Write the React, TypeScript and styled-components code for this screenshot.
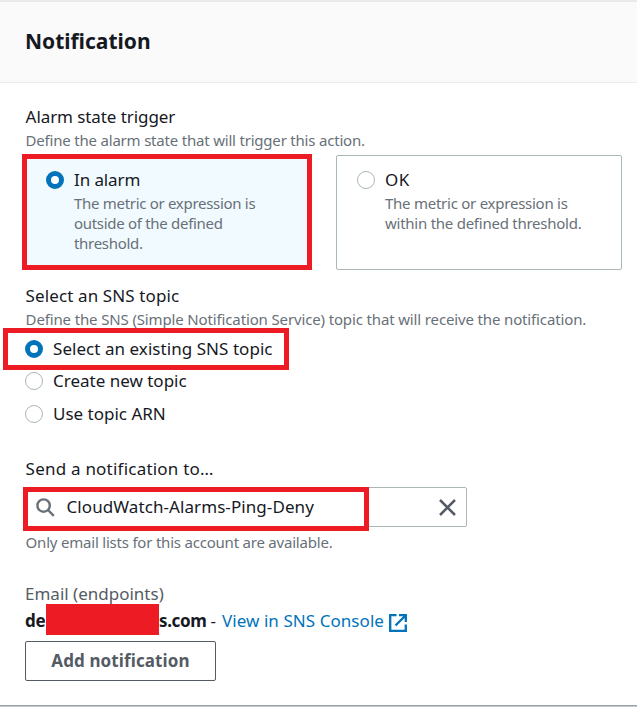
import React from "react";
import styled, { createGlobalStyle } from "styled-components";

const GlobalStyle = createGlobalStyle`
  * { box-sizing: border-box; }
  body {
    margin: 0;
    background: #fff;
    color: #16191f;
    font-family: "Noto Sans", "Open Sans", sans-serif;
    overflow: hidden;
  }
`;

const Panel = styled.section`
  display: flex;
  flex-direction: column;
  height: 707px;
  border-top: 2px solid #eaeaea;
`;

const Header = styled.header`
  height: 81px;
  padding: 25px 0 0 25px;
  background: #fafafa;
  border-bottom: 1px solid #eaeded;
`;

const Title = styled.h2`
  margin: 0;
  font-size: 21px;
  line-height: 28px;
  font-weight: 700;
`;

const Body = styled.div`
  flex: 1;
  display: flex;
  flex-direction: column;
  align-items: flex-start;
  padding: 22px 0 0 25px;
`;

const Footer = styled.div`
  height: 2px;
  background: #c3cacd;
  border-top: 1px solid #98a3a8;
`;

const Label = styled.div<{ $track?: number; $muted?: boolean }>`
  font-size: 17px;
  line-height: 23px;
  white-space: nowrap;
  letter-spacing: ${(p) => (p.$track ? `${p.$track}px` : "normal")};
  color: ${(p) => (p.$muted ? "#545b64" : "inherit")};
`;

const Hint = styled.div<{ $track?: number; $wrap?: boolean }>`
  max-width: ${(p) => (p.$wrap ? "205px" : "none")};
  font-size: 15px;
  line-height: 20px;
  color: #687078;
  white-space: ${(p) => (p.$wrap ? "normal" : "nowrap")};
  letter-spacing: ${(p) => p.$track ?? 0}px;
`;

const Field = styled.div<{ $gap: number; $after: number }>`
  display: flex;
  flex-direction: column;
  gap: ${(p) => p.$gap}px;
  margin-bottom: ${(p) => p.$after}px;
  padding-left: 0.6px;
`;

const Tiles = styled.div`
  display: grid;
  grid-template-columns: 286px 286px;
  column-gap: 25px;
  margin-bottom: 14px;
`;

const Tile = styled.div<{ $selected?: boolean }>`
  position: relative;
  display: flex;
  gap: 10px;
  height: 115px;
  padding: 12px 14px 0 20px;
  border: 1px solid #aab7b8;
  border-radius: 2px;
  background: ${(p) => (p.$selected ? "#f1faff" : "#fff")};
`;

const Highlight = styled.span<{ $inset: string }>`
  position: absolute;
  inset: ${(p) => p.$inset};
  border: 5px solid #ed1c24;
  pointer-events: none;
`;

const Radio = styled.span<{ $checked?: boolean }>`
  flex: none;
  width: 18px;
  height: 18px;
  margin-top: 3px;
  border-radius: 50%;
  background: #fff;
  border: ${(p) => (p.$checked ? "5.5px solid #0073bb" : "1px solid #aab7b8")};
`;

const TileText = styled.div`
  display: flex;
  flex-direction: column;
  gap: 2px;
`;

const RadioList = styled.div`
  display: grid;
  grid-template-rows: 32px 33px 23px;
  margin-bottom: 32px;
`;

const RadioRow = styled.div`
  position: relative;
  display: flex;
  gap: 10px;
  width: 264px;
  height: 23px;
`;

const SearchBox = styled.div`
  position: relative;
  display: flex;
  align-items: center;
  width: 442px;
  height: 40px;
  margin-bottom: 5px;
  padding: 0 10.5px 0 10px;
  border: 1px solid #aab7b8;
  border-radius: 2px;
`;

const SearchValue = styled.div`
  flex: 1;
  margin: -1px 0 0 11.5px;
`;

const Endpoint = styled.div`
  display: flex;
  align-items: center;
  width: 400px;
  height: 33px;
  margin: -1px 0 4px;
  font-size: 17px;
  line-height: 23px;
  white-space: nowrap;
`;

const Address = styled.strong<{ $width: number }>`
  width: ${(p) => p.$width}px;
  letter-spacing: -0.35px;
`;

const Redaction = styled.span`
  flex: none;
  align-self: flex-start;
  width: 113px;
  height: 31px;
  background: #ed1c24;
`;

const Dash = styled.span`
  width: 16px;
  padding-left: 4.5px;
`;

const Link = styled.a`
  display: flex;
  align-items: center;
  gap: 5px;
  color: #0073bb;
  letter-spacing: 0.06px;
  svg { margin-top: 5px; }
`;

const Button = styled.button`
  width: 191px;
  height: 40px;
  padding: 0 0 2px;
  border: 1px solid #545b64;
  border-radius: 2px;
  background: #fff;
  color: #545b64;
  font: 700 17px/23px "Noto Sans", sans-serif;
  letter-spacing: 0.12px;
`;

const SearchIcon = () => (
  <svg width="19" height="19" viewBox="0 0 19 19" fill="none" stroke="#687078" strokeWidth="2.4">
    <circle cx="7.6" cy="7.6" r="6.2" />
    <path d="M12 12l5.8 5.8" />
  </svg>
);

const CloseIcon = () => (
  <svg width="17" height="17" viewBox="0 0 17 17" fill="none" stroke="#545b64" strokeWidth="2.5">
    <path d="M1 1l15 15M16 1L1 16" />
  </svg>
);

const ExternalIcon = () => (
  <svg width="18" height="18" viewBox="0 0 18 18" fill="none" stroke="#0073bb" strokeWidth="2.3">
    <path d="M7.5 1.2H1.2v15.6h15.6v-6.3" />
    <path d="M10 1.2h6.8V8M16.5 1.5L6.5 11.5" />
  </svg>
);

export default function App() {
  return (
    <>
      <GlobalStyle />
      <Panel>
        <Header>
          <Title>Notification</Title>
        </Header>
        <Body>
          <Field $gap={2} $after={5}>
            <Label $track={-0.08}>Alarm state trigger</Label>
            <Hint $track={-0.2}>Define the alarm state that will trigger this action.</Hint>
          </Field>
          <Tiles>
            <Tile $selected>
              <Radio $checked />
              <TileText>
                <Label $track={-0.1}>In alarm</Label>
                <Hint $wrap $track={-0.3}>
                  The metric or expression is outside of the defined threshold.
                </Hint>
              </TileText>
              <Highlight $inset="-2px -2px -1px -4px" />
            </Tile>
            <Tile>
              <Radio />
              <TileText>
                <Label $track={0.4}>OK</Label>
                <Hint $wrap $track={-0.25}>
                  The metric or expression is within the defined threshold.
                </Hint>
              </TileText>
            </Tile>
          </Tiles>
          <Field $gap={2} $after={8}>
            <Label $track={0.12}>Select an SNS topic</Label>
            <Hint $track={-0.14}>
              Define the SNS (Simple Notification Service) topic that will receive the notification.
            </Hint>
          </Field>
          <RadioList>
            <RadioRow>
              <Radio $checked />
              <Label $track={0.05}>Select an existing SNS topic</Label>
              <Highlight $inset="-9px 0 -10px -22px" />
            </RadioRow>
            <RadioRow>
              <Radio />
              <Label>Create new topic</Label>
            </RadioRow>
            <RadioRow>
              <Radio />
              <Label>Use topic ARN</Label>
            </RadioRow>
          </RadioList>
          <Field $gap={0} $after={7}>
            <Label $track={0.22}>Send a notification to…</Label>
          </Field>
          <SearchBox>
            <SearchIcon />
            <SearchValue>
              <Label $track={0.08}>CloudWatch-Alarms-Ping-Deny</Label>
            </SearchValue>
            <CloseIcon />
            <Highlight $inset="-1px 97px -5px -3px" />
          </SearchBox>
          <Field $gap={0} $after={30}>
            <Hint $track={-0.21}>Only email lists for this account are available.</Hint>
          </Field>
          <Label $muted>Email (endpoints)</Label>
          <Endpoint>
            <Address $width={21}>de</Address>
            <Redaction />
            <Address $width={47}>s.com</Address>
            <Dash>-</Dash>
            <Link>
              View in SNS Console
              <ExternalIcon />
            </Link>
          </Endpoint>
          <Button>Add notification</Button>
        </Body>
        <Footer />
      </Panel>
    </>
  );
}
